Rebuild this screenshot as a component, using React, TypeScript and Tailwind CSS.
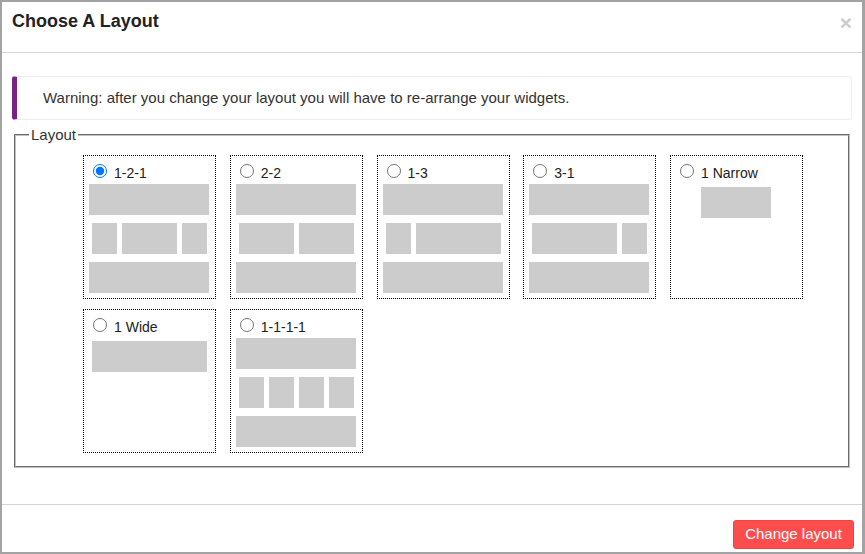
import React from "react";

type Layout = { id: string; label: string; checked?: boolean; kind: string };

const layouts: Layout[][] = [
  [
    { id: "121", label: "1-2-1", checked: true, kind: "121" },
    { id: "22", label: "2-2", kind: "22" },
    { id: "13", label: "1-3", kind: "13" },
    { id: "31", label: "3-1", kind: "31" },
    { id: "1n", label: "1 Narrow", kind: "1n" },
  ],
  [
    { id: "1w", label: "1 Wide", kind: "1w" },
    { id: "1111", label: "1-1-1-1", kind: "1111" },
  ],
];

function Full() {
  return <div className="h-[31px] w-[120px] bg-[#cccccc]" />;
}

function Cols({ widths }: { widths: number[] }) {
  return (
    <div className="flex h-[31px] gap-[5px] pl-[3px]">
      {widths.map((w, i) => (
        <div key={i} className="h-[31px] bg-[#cccccc]" style={{ width: w }} />
      ))}
    </div>
  );
}

function Preview({ kind }: { kind: string }) {
  if (kind === "1n") {
    return (
      <div className="flex justify-center pt-[3px]">
        <div className="h-[31px] w-[70px] bg-[#cccccc]" />
      </div>
    );
  }
  if (kind === "1w") {
    return (
      <div className="pl-[3px] pt-[3px]">
        <div className="h-[31px] w-[115px] bg-[#cccccc]" />
      </div>
    );
  }
  const mid: Record<string, number[]> = {
    "121": [25, 55, 25],
    "22": [55, 55],
    "13": [25, 85],
    "31": [85, 25],
    "1111": [25, 25, 25, 25],
  };
  return (
    <div className="flex flex-col gap-[8px]">
      <Full />
      <Cols widths={mid[kind]} />
      <Full />
    </div>
  );
}

function Card({ l }: { l: Layout }) {
  return (
    <div className="h-[144px] w-[133px] shrink-0 border border-dotted border-black pl-[5px] pr-[6px] pt-[5px]">
      <label className="flex h-[23px] items-end pb-[3px] text-[14px] leading-[16px] text-[#222222]">
        <input
          type="radio"
          name="layout"
          defaultChecked={l.checked}
          className="mb-[3px] ml-[4px] mr-[3px] h-[14px] w-[14px] shrink-0"
        />
        <span className="ml-[4px]">{l.label}</span>
      </label>
      <Preview kind={l.kind} />
    </div>
  );
}

export default function App() {
  return (
    <div
      className="h-[554px] w-[865px] overflow-hidden bg-[#a3a3a3] pb-[2px] pl-[2px] pr-[3px] pt-[2px]"
      style={{ fontFamily: '"Liberation Sans", Arial, sans-serif' }}
    >
      <div className="flex h-full w-full flex-col bg-white">
        <div className="flex h-[51px] shrink-0 items-start justify-between border-b border-[#d4d4d4] pl-[10px] pr-[10px] pt-[9px]">
          <h4 className="text-[18px] font-bold leading-[21px] text-[#222222]">Choose A Layout</h4>
          <span className="mt-[1px] text-[21px] font-bold leading-[21px] text-[#cccccc]">×</span>
        </div>
        <div className="flex-1 px-[10px] pt-[23px]">
          <div className="flex h-[44px] items-center rounded-[3px] border border-l-[5px] border-[#eeeeee] border-l-[#7a1f85] pl-[26px] text-[15px] text-[#333333]">
            Warning: after you change your layout you will have to re-arrange your widgets.
          </div>
          <fieldset className="mx-[2px] mt-[6px] border-2 border-[#c0c0c0] pb-[13px] pl-[67px] pt-[11px] [border-style:groove]">
            <legend className="ml-[-54px] px-[2px] text-[15px] leading-[18px] text-[#333333]">Layout</legend>
            <div className="flex flex-col gap-[10px]">
              {layouts.map((row, ri) => (
                <div key={ri} className="flex gap-[13.75px]">
                  {row.map((l) => (
                    <Card key={l.id} l={l} />
                  ))}
                </div>
              ))}
            </div>
          </fieldset>
        </div>
        <div className="flex h-[48px] shrink-0 justify-end border-t border-[#d4d4d4] pr-[8px] pt-[15px]">
          <button className="h-[29px] w-[121px] rounded-[3px] border border-[#f04444] bg-[#ff4d4d] text-[15px] text-white">
            Change layout
          </button>
        </div>
      </div>
    </div>
  );
}
